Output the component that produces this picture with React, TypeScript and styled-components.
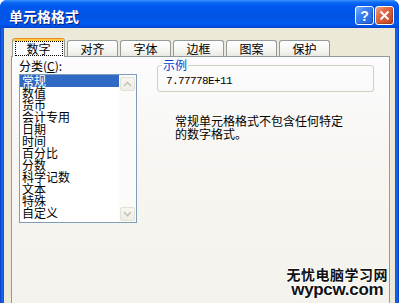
import React from 'react'
import styled, { createGlobalStyle } from 'styled-components'

const GlobalStyle = createGlobalStyle`
  html, body {
    margin: 0;
    padding: 0;
    overflow: hidden;
    background: #ffffff;
  }
  body {
    font-family: 'Noto Sans CJK SC', 'Liberation Sans', sans-serif;
    font-size: 12px;
    color: #000;
  }
`

const Window = styled.div`
  position: relative;
  width: 399px;
  height: 303px;
  display: flex;
  flex-direction: column;
  border-radius: 7px 7px 0 0;
  overflow: hidden;
  background: linear-gradient(
    90deg,
    #0a3cc4 0,
    #1668ee 2px,
    #0855dd 4px,
    #0855dd calc(100% - 4px),
    #1668ee calc(100% - 2px),
    #0a3cc4 100%
  );
`

const TitleBar = styled.div`
  height: 28px;
  flex: none;
  display: flex;
  align-items: center;
  padding: 3px 5px 0 9px;
  box-sizing: border-box;
  background: linear-gradient(
    180deg,
    #3d95ff 0%,
    #0a6af5 9%,
    #0058ee 22%,
    #0054e3 60%,
    #005af2 86%,
    #0043cf 100%
  );
`

const Title = styled.div`
  flex: 1;
  color: #fff;
  font-weight: bold;
  font-size: 14px;
  line-height: 16px;
  letter-spacing: 0;
  text-shadow: 1px 1px 0 #0a1a80;
`

const CaptionButtons = styled.div`
  display: flex;
  gap: 1px;
`

const CaptionButton = styled.div<{ kind: 'help' | 'close' }>`
  box-sizing: border-box;
  width: 19px;
  height: 19px;
  border: 1px solid #fff;
  border-radius: 3px;
  display: flex;
  align-items: center;
  justify-content: center;
  color: #fff;
  font-family: 'Liberation Sans', sans-serif;
  font-weight: bold;
  font-size: 14px;
  background: ${({ kind }) =>
    kind === 'help'
      ? 'linear-gradient(135deg, #7fb2ff 0%, #3c82f4 35%, #1e5fdc 100%)'
      : 'linear-gradient(135deg, #f3a48a 0%, #e06a45 35%, #c3411c 100%)'};
  box-shadow: inset -1px -1px 1px rgba(0, 0, 0, 0.2);
`

const Body = styled.div`
  flex: 1;
  margin: 0 4px;
  background: #ece9d8;
  padding: 10px 5px 0 7px;
  display: flex;
  flex-direction: column;
`

const TabStrip = styled.div`
  height: 18px;
  flex: none;
  display: flex;
  align-items: flex-end;
`

const Tab = styled.div<{ active?: boolean }>`
  position: relative;
  z-index: ${({ active }) => (active ? 2 : 1)};
  box-sizing: border-box;
  width: ${({ active }) => (active ? 53 : 51)}px;
  height: ${({ active }) => (active ? 19 : 16)}px;
  margin-left: ${({ active }) => (active ? 1 : 2)}px;
  margin-bottom: ${({ active }) => (active ? -1 : 0)}px;
  border: 1px solid #919b9c;
  border-bottom: none;
  border-top-color: ${({ active }) => (active ? '#e68b2c' : '#919b9c')};
  border-radius: 3px 3px 0 0;
  background: ${({ active }) =>
    active ? '#fcfcfe' : 'linear-gradient(180deg, #ffffff 0%, #f3f3ef 70%, #e9e8e1 100%)'};
  box-shadow: ${({ active }) => (active ? 'inset 0 2px 0 #ffc83c' : 'none')};
  display: flex;
  justify-content: center;
  align-items: ${({ active }) => (active ? 'flex-start' : 'center')};
  font-size: 12px;
  line-height: 13px;
`

const FocusRect = styled.span`
  box-sizing: border-box;
  margin-top: 2px;
  width: 48px;
  height: 15px;
  border: 1px dotted #000;
  display: flex;
  align-items: center;
  justify-content: center;
`

const Panel = styled.div`
  flex: 1;
  border: 1px solid #919b9c;
  border-bottom: none;
  background: linear-gradient(180deg, #fcfcfe 0%, #f7f6f2 40%, #f3f2ec 100%);
  display: grid;
  grid-template-columns: 118px 217px;
  column-gap: 20px;
  align-content: start;
  padding: 2px 0 0 7px;
`

const Column = styled.div`
  display: flex;
  flex-direction: column;
`

const FieldLabel = styled.div`
  line-height: 14px;
  margin-bottom: 1px;
  u {
    text-decoration: underline;
  }
`

const ListBox = styled.div`
  box-sizing: border-box;
  height: 149px;
  border: 1px solid #7f9db9;
  background: #fff;
  display: flex;
`

const Items = styled.ul`
  flex: 1;
  margin: 0;
  padding: 0;
  list-style: none;
`

const Item = styled.li<{ selected?: boolean }>`
  height: 12px;
  line-height: 12px;
  padding-left: 2px;
  white-space: nowrap;
  background: ${({ selected }) => (selected ? '#316ac5' : 'transparent')};
  color: ${({ selected }) => (selected ? '#fff' : '#000')};
`

const ScrollBar = styled.div`
  width: 17px;
  box-sizing: border-box;
  padding: 2px 1px 1px 1px;
  display: flex;
  flex-direction: column;
  justify-content: space-between;
  background: #fbfbf9;
`

const ScrollButton = styled.div`
  box-sizing: border-box;
  width: 15px;
  height: 14px;
  border: 1px solid #e3e1d6;
  border-radius: 2px;
  background: linear-gradient(180deg, #f7f6f1 0%, #eeede6 100%);
  display: flex;
  align-items: center;
  justify-content: center;
`

const Group = styled.fieldset`
  margin: -1px 0 0 0;
  padding: 0 3px 3px 4px;
  border: 1px solid #d0d0bf;
  border-radius: 3px;
  min-width: 0;
`

const Legend = styled.legend`
  padding: 0 1px;
  line-height: 14px;
  color: #0046d5;
`

const Sample = styled.div`
  margin: 2px 0 0 4px;
  line-height: 14px;
  font-family: 'Liberation Mono', monospace;
  font-size: 11px;
  letter-spacing: -0.6px;
`

const Description = styled.p`
  margin: 22px 0 0 18px;
  line-height: 13px;
`

const Watermark = styled.div`
  position: absolute;
  right: 11px;
  bottom: 6px;
  display: flex;
  flex-direction: column;
  align-items: center;
  font-weight: bold;
  color: #111;
  text-shadow: 1px 0 0 #fff, -1px 0 0 #fff, 0 1px 0 #fff, 0 -1px 0 #fff;
`

const WatermarkCn = styled.div`
  font-size: 14px;
  line-height: 16px;
  letter-spacing: 0.5px;
`

const WatermarkEn = styled.div`
  font-family: 'Liberation Sans', sans-serif;
  font-size: 17px;
  line-height: 15px;
  letter-spacing: -0.3px;
`

function Chevron({ up }: { up?: boolean }) {
  return (
    <svg width="9" height="6" viewBox="0 0 9 6">
      <path
        d={up ? 'M1 5 L4.5 1.5 L8 5' : 'M1 1 L4.5 4.5 L8 1'}
        fill="none"
        stroke="#c6c4b6"
        strokeWidth="1.6"
      />
    </svg>
  )
}

const tabs = ['数字', '对齐', '字体', '边框', '图案', '保护']
const categories = [
  '常规',
  '数值',
  '货币',
  '会计专用',
  '日期',
  '时间',
  '百分比',
  '分数',
  '科学记数',
  '文本',
  '特殊',
  '自定义',
]

export default function App() {
  return (
    <Window>
      <GlobalStyle />
      <TitleBar>
        <Title>单元格格式</Title>
        <CaptionButtons>
          <CaptionButton kind="help">?</CaptionButton>
          <CaptionButton kind="close">
            <svg width="11" height="11" viewBox="0 0 11 11">
              <path d="M1.5 1.5 L9.5 9.5 M9.5 1.5 L1.5 9.5" stroke="#fff" strokeWidth="2" />
            </svg>
          </CaptionButton>
        </CaptionButtons>
      </TitleBar>
      <Body>
        <TabStrip>
          {tabs.map((t, i) =>
            i === 0 ? (
              <Tab key={t} active>
                <FocusRect>{t}</FocusRect>
              </Tab>
            ) : (
              <Tab key={t}>{t}</Tab>
            )
          )}
        </TabStrip>
        <Panel>
          <Column>
            <FieldLabel>
              分类(<u>C</u>):
            </FieldLabel>
            <ListBox>
              <Items>
                {categories.map((c, i) => (
                  <Item key={c} selected={i === 0}>
                    {c}
                  </Item>
                ))}
              </Items>
              <ScrollBar>
                <ScrollButton>
                  <Chevron up />
                </ScrollButton>
                <ScrollButton>
                  <Chevron />
                </ScrollButton>
              </ScrollBar>
            </ListBox>
          </Column>
          <Column>
            <Group>
              <Legend>示例</Legend>
              <Sample>7.77778E+11</Sample>
            </Group>
            <Description>
              常规单元格格式不包含任何特定
              <br />
              的数字格式。
            </Description>
          </Column>
        </Panel>
      </Body>
      <Watermark>
        <WatermarkCn>无忧电脑学习网</WatermarkCn>
        <WatermarkEn>wypcw.com</WatermarkEn>
      </Watermark>
    </Window>
  )
}
